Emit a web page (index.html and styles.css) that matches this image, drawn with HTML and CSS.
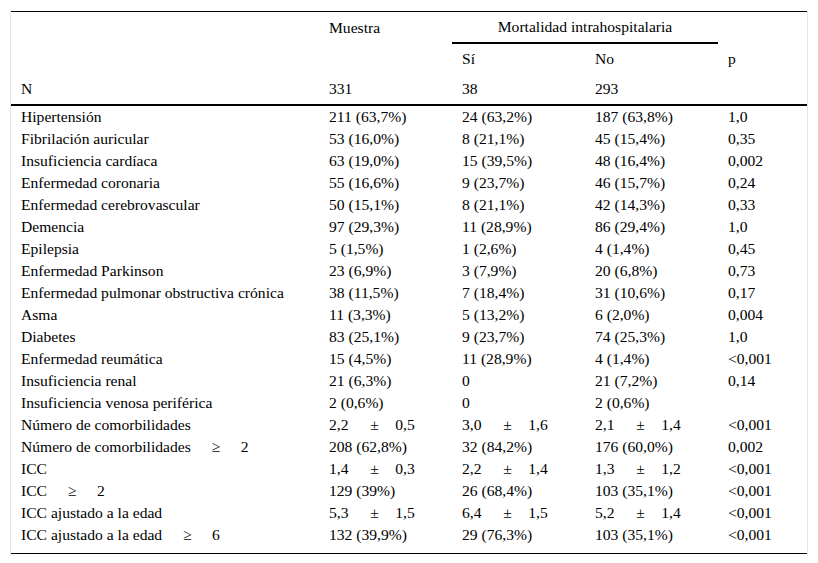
FILE: index.html
```html
<!DOCTYPE html>
<html lang="es">
<head>
<meta charset="utf-8">
<title>Tabla</title>
<link rel="stylesheet" href="styles.css">
</head>
<body>
<div class="frame">
<table class="data">
<colgroup>
<col class="c1"><col class="c2"><col class="c3"><col class="c4"><col class="c5">
</colgroup>
<thead>
<tr class="h1">
<th></th><th>Muestra</th><th colspan="2" class="group">Mortalidad intrahospitalaria</th><th></th>
</tr>
<tr class="h2">
<th></th><th></th><th>Sí</th><th>No</th><th>p</th>
</tr>
<tr class="h3">
<th>N</th><th>331</th><th>38</th><th>293</th><th></th>
</tr>
</thead>
<tbody>
<tr><td>Hipertensión</td><td>211 (63,7%)</td><td>24 (63,2%)</td><td>187 (63,8%)</td><td>1,0</td></tr>
<tr><td>Fibrilación auricular</td><td>53 (16,0%)</td><td>8 (21,1%)</td><td>45 (15,4%)</td><td>0,35</td></tr>
<tr><td>Insuficiencia cardíaca</td><td>63 (19,0%)</td><td>15 (39,5%)</td><td>48 (16,4%)</td><td>0,002</td></tr>
<tr><td>Enfermedad coronaria</td><td>55 (16,6%)</td><td>9 (23,7%)</td><td>46 (15,7%)</td><td>0,24</td></tr>
<tr><td>Enfermedad cerebrovascular</td><td>50 (15,1%)</td><td>8 (21,1%)</td><td>42 (14,3%)</td><td>0,33</td></tr>
<tr><td>Demencia</td><td>97 (29,3%)</td><td>11 (28,9%)</td><td>86 (29,4%)</td><td>1,0</td></tr>
<tr><td>Epilepsia</td><td>5 (1,5%)</td><td>1 (2,6%)</td><td>4 (1,4%)</td><td>0,45</td></tr>
<tr><td>Enfermedad Parkinson</td><td>23 (6,9%)</td><td>3 (7,9%)</td><td>20 (6,8%)</td><td>0,73</td></tr>
<tr><td>Enfermedad pulmonar obstructiva crónica</td><td>38 (11,5%)</td><td>7 (18,4%)</td><td>31 (10,6%)</td><td>0,17</td></tr>
<tr><td>Asma</td><td>11 (3,3%)</td><td>5 (13,2%)</td><td>6 (2,0%)</td><td>0,004</td></tr>
<tr><td>Diabetes</td><td>83 (25,1%)</td><td>9 (23,7%)</td><td>74 (25,3%)</td><td>1,0</td></tr>
<tr><td>Enfermedad reumática</td><td>15 (4,5%)</td><td>11 (28,9%)</td><td>4 (1,4%)</td><td>&lt;0,001</td></tr>
<tr><td>Insuficiencia renal</td><td>21 (6,3%)</td><td>0</td><td>21 (7,2%)</td><td>0,14</td></tr>
<tr><td>Insuficiencia venosa periférica</td><td>2 (0,6%)</td><td>0</td><td>2 (0,6%)</td><td></td></tr>
<tr><td>Número de comorbilidades</td><td>2,2 <span class="pm">±</span> 0,5</td><td>3,0 <span class="pm">±</span> 1,6</td><td>2,1 <span class="pm">±</span> 1,4</td><td>&lt;0,001</td></tr>
<tr><td>Número de comorbilidades <span class="ge">≥</span> 2</td><td>208 (62,8%)</td><td>32 (84,2%)</td><td>176 (60,0%)</td><td>0,002</td></tr>
<tr><td>ICC</td><td>1,4 <span class="pm">±</span> 0,3</td><td>2,2 <span class="pm">±</span> 1,4</td><td>1,3 <span class="pm">±</span> 1,2</td><td>&lt;0,001</td></tr>
<tr><td>ICC <span class="ge">≥</span> 2</td><td>129 (39%)</td><td>26 (68,4%)</td><td>103 (35,1%)</td><td>&lt;0,001</td></tr>
<tr><td>ICC ajustado a la edad</td><td>5,3 <span class="pm">±</span> 1,5</td><td>6,4 <span class="pm">±</span> 1,5</td><td>5,2 <span class="pm">±</span> 1,4</td><td>&lt;0,001</td></tr>
<tr><td>ICC ajustado a la edad <span class="ge">≥</span> 6</td><td>132 (39,9%)</td><td>29 (76,3%)</td><td>103 (35,1%)</td><td>&lt;0,001</td></tr>
</tbody>
</table>
</div>
</body>
</html>
```
FILE: styles.css
```css
html, body {
  margin: 0;
  padding: 0;
  background: #fff;
}
body {
  padding: 10px;
  font-family: "Liberation Serif", "Times New Roman", serif;
  font-size: 15.6px;
  color: #000;
}
.frame {
  border-left: 1px solid #e4e4e4;
  border-right: 1px solid #e4e4e4;
  padding: 1px 0 2px;
}
.data {
  width: 100%;
  border-collapse: collapse;
  table-layout: fixed;
  border-top: 1px solid #000;
  border-bottom: 1px solid #000;
}
.c1 { width: 308px; }
.c2 { width: 133px; }
.c3 { width: 133px; }
.c4 { width: 133px; }
.c5 { width: 89px; }
.data th,
.data td {
  text-align: left;
  font-weight: normal;
  padding: 0 10px;
  white-space: nowrap;
  vertical-align: middle;
  line-height: 18px;
}
.data thead th {
  height: 30px;
}
.data thead .group {
  border-bottom: 2px solid #000;
  text-align: center;
}
.data thead .h3 th {
  border-bottom: 2px solid #000;
}
.data tbody td {
  height: 22px;
}
.data tbody tr:last-child td {
  height: 27px;
  vertical-align: top;
  padding-top: 2px;
}
.pm {
  margin: 0 0.8em 0 1.15em;
}
.ge {
  margin: 0 1.05em 0 1.1em;
}
```
